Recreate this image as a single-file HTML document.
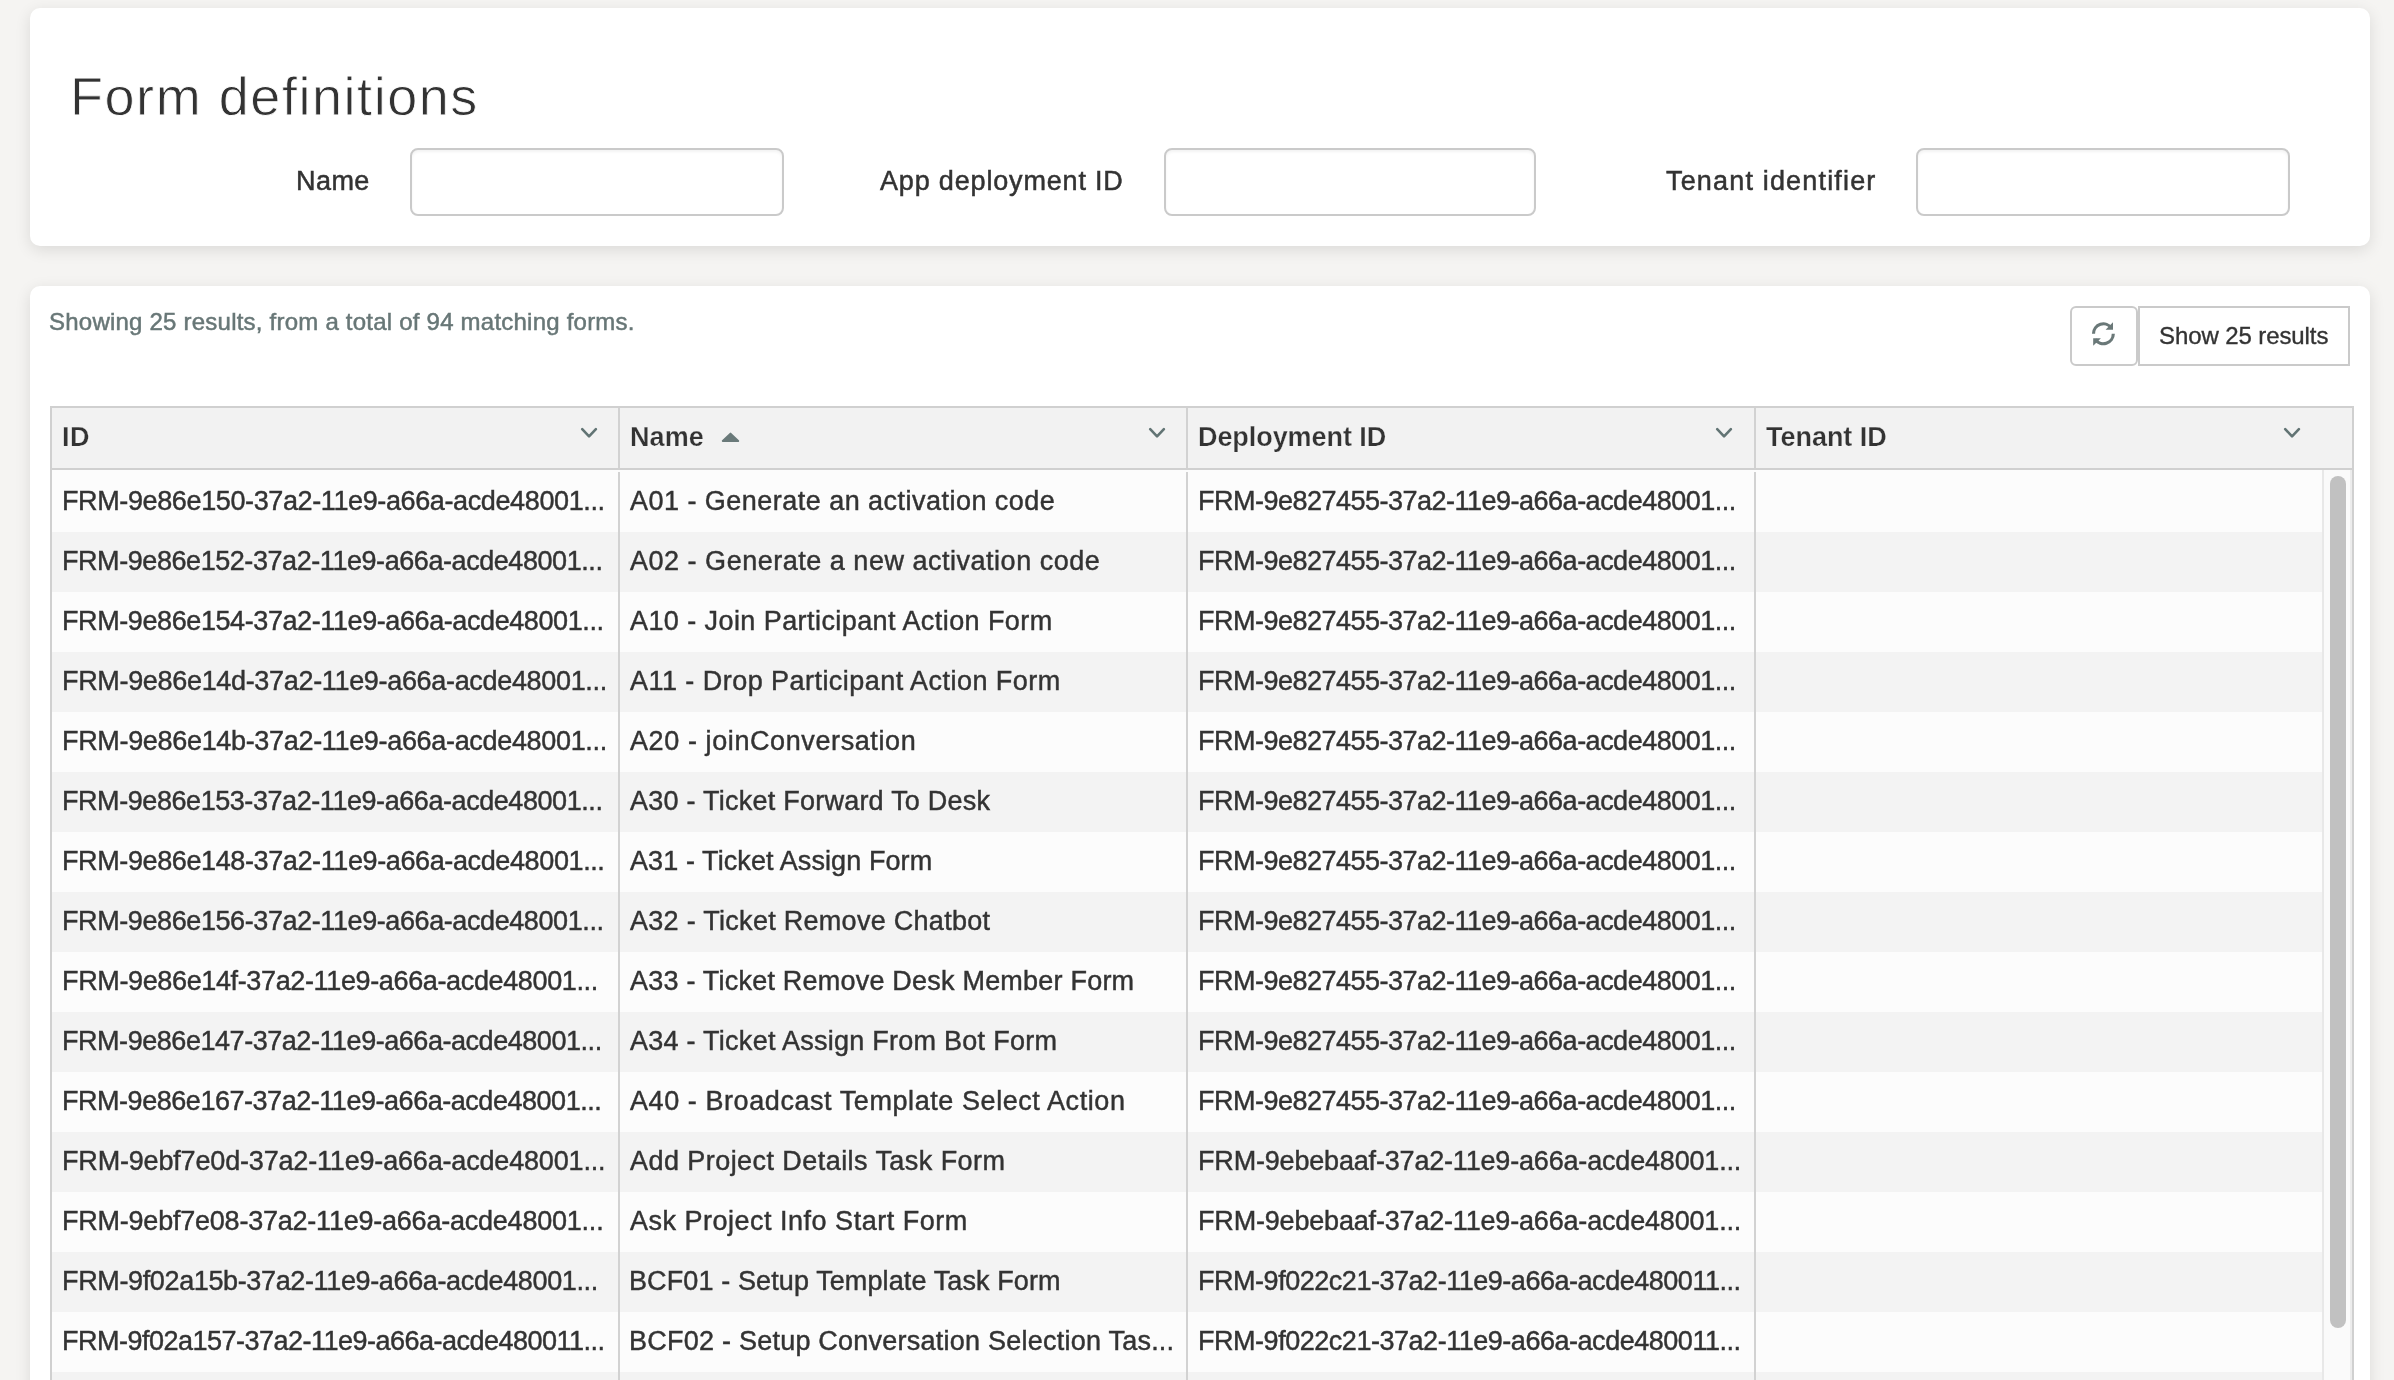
<!DOCTYPE html><html><head><meta charset="utf-8"><style>
*{margin:0;padding:0;box-sizing:border-box}
html,body{width:2394px;height:1380px;overflow:hidden;background:#f5f4f2;font-family:"Liberation Sans",sans-serif;color:#333}
.t{position:absolute;white-space:nowrap;line-height:1;will-change:transform}
.cell{-webkit-text-stroke:0.45px #333}
.lbl{-webkit-text-stroke:0.5px #333}
.grey{-webkit-text-stroke:0.5px #687777}
.btnt{-webkit-text-stroke:0.35px #333}
.title{color:#333;-webkit-text-stroke:0.8px #fff}
.card{position:absolute;background:#fff;border-radius:10px;box-shadow:0 4px 16px rgba(0,0,0,0.11)}
.inp{position:absolute;top:148px;height:68px;border:2px solid #cacaca;border-radius:8px;background:#fff;box-shadow:inset 0 2px 3px rgba(0,0,0,0.05)}
.grey{color:#687777}
.hdr{font-weight:bold;-webkit-text-stroke:0.25px #f2f2f2}
.row{position:absolute;left:52px;width:2270px;height:60px}
.vl{position:absolute;width:2px;background:#d2d2d2}
</style></head><body>
<div class="card" style="left:30px;top:8px;width:2340px;height:238px"></div>
<div class="t title" id="title" style="left:70.38px;top:68.99px;font-size:54px;letter-spacing:1.548px">Form definitions</div>
<div class="t lbl" id="lname" style="left:296.25px;top:167.54px;font-size:27px;letter-spacing:0.450px">Name</div>
<div class="inp" style="left:410px;width:374px"></div>
<div class="t lbl" id="lapp" style="left:880.05px;top:167.54px;font-size:27px;letter-spacing:0.827px">App deployment ID</div>
<div class="inp" style="left:1164px;width:372px"></div>
<div class="t lbl" id="lten" style="left:1666.44px;top:167.54px;font-size:27px;letter-spacing:1.170px">Tenant identifier</div>
<div class="inp" style="left:1916px;width:374px"></div>
<div class="card" style="left:30px;top:286px;width:2340px;height:1200px"></div>
<div class="t grey" id="showing" style="left:49.32px;top:309.68px;font-size:24px;letter-spacing:0.224px">Showing 25 results, from a total of 94 matching forms.</div>
<div style="position:absolute;left:2070px;top:306px;width:68px;height:60px;border:2px solid #cacaca;border-radius:6px;background:#fff"></div>
<svg style="position:absolute;left:2086px;top:316px" width="36" height="36" viewBox="0 0 36 36"><g fill="none" stroke="#6a7878" stroke-width="3.15"><path d="M7.5 17.8 A9.9 9.9 0 0 1 25.5 12.1"/><path d="M27.3 17.8 A9.9 9.9 0 0 1 9.3 23.5"/></g><path d="M27 6.3 L27 13.8 L19.6 13.8 Z" fill="#6a7878"/><path d="M7.2 22.2 L7.2 29.7 L14.9 22.2 Z" fill="#6a7878"/></svg>
<div style="position:absolute;left:2138px;top:306px;width:212px;height:60px;border:2px solid #cacaca;background:#fff"></div>
<div class="t btnt" id="btn" style="left:2159.10px;top:323.78px;font-size:24px;letter-spacing:-0.096px">Show 25 results</div>
<div style="position:absolute;left:50px;top:406px;width:2304px;height:1100px;border:2px solid #d0d0d0;background:#fcfcfc"></div>
<div style="position:absolute;left:52px;top:408px;width:2300px;height:60px;background:#f2f2f2"></div>
<div style="position:absolute;left:52px;top:468px;width:2300px;height:2px;background:#d0d0d0"></div>
<div class="row" style="top:470px;height:62px;background:#fcfcfc"></div>
<div class="row" style="top:532px;background:#f3f3f3"></div>
<div class="row" style="top:592px;background:#fcfcfc"></div>
<div class="row" style="top:652px;background:#f3f3f3"></div>
<div class="row" style="top:712px;background:#fcfcfc"></div>
<div class="row" style="top:772px;background:#f3f3f3"></div>
<div class="row" style="top:832px;background:#fcfcfc"></div>
<div class="row" style="top:892px;background:#f3f3f3"></div>
<div class="row" style="top:952px;background:#fcfcfc"></div>
<div class="row" style="top:1012px;background:#f3f3f3"></div>
<div class="row" style="top:1072px;background:#fcfcfc"></div>
<div class="row" style="top:1132px;background:#f3f3f3"></div>
<div class="row" style="top:1192px;background:#fcfcfc"></div>
<div class="row" style="top:1252px;background:#f3f3f3"></div>
<div class="row" style="top:1312px;background:#fcfcfc"></div>
<div class="row" style="top:1372px;background:#f3f3f3"></div>
<div class="vl" style="left:618px;top:408px;height:60px"></div>
<div class="vl" style="left:618px;top:472px;height:1000px"></div>
<div class="vl" style="left:1186px;top:408px;height:60px"></div>
<div class="vl" style="left:1186px;top:472px;height:1000px"></div>
<div class="vl" style="left:1754px;top:408px;height:60px"></div>
<div class="vl" style="left:1754px;top:472px;height:1000px"></div>
<div class="t hdr" id="h1" style="left:61.81px;top:424.34px;font-size:27px;letter-spacing:0.540px">ID</div>
<svg style="position:absolute;left:579px;top:425px" width="20" height="16" viewBox="0 0 20 16"><path d="M3.2 4.1 L10.05 11.3 L16.9 4.1" fill="none" stroke="#627474" stroke-width="2.6" stroke-linecap="round" stroke-linejoin="round"/></svg>
<div class="t hdr" id="h2" style="left:630.20px;top:424.34px;font-size:27px;letter-spacing:0.060px">Name</div>
<svg style="position:absolute;left:1147px;top:425px" width="20" height="16" viewBox="0 0 20 16"><path d="M3.2 4.1 L10.05 11.3 L16.9 4.1" fill="none" stroke="#627474" stroke-width="2.6" stroke-linecap="round" stroke-linejoin="round"/></svg>
<div class="t hdr" id="h3" style="left:1197.55px;top:424.34px;font-size:27px;letter-spacing:-0.071px">Deployment ID</div>
<svg style="position:absolute;left:1714px;top:425px" width="20" height="16" viewBox="0 0 20 16"><path d="M3.2 4.1 L10.05 11.3 L16.9 4.1" fill="none" stroke="#627474" stroke-width="2.6" stroke-linecap="round" stroke-linejoin="round"/></svg>
<div class="t hdr" id="h4" style="left:1766.17px;top:424.34px;font-size:27px;letter-spacing:-0.034px">Tenant ID</div>
<svg style="position:absolute;left:2282px;top:425px" width="20" height="16" viewBox="0 0 20 16"><path d="M3.2 4.1 L10.05 11.3 L16.9 4.1" fill="none" stroke="#627474" stroke-width="2.6" stroke-linecap="round" stroke-linejoin="round"/></svg>
<svg style="position:absolute;left:720px;top:430px" width="21" height="14" viewBox="0 0 21 14"><path d="M10.5 3.6 L18.2 11 L2.8 11 Z" fill="#6a7a7a" stroke="#6a7a7a" stroke-width="2" stroke-linejoin="round"/></svg>
<div class="t cell" id="r0a" style="left:62.03px;top:487.54px;font-size:27px;letter-spacing:-0.381px">FRM-9e86e150-37a2-11e9-a66a-acde48001...</div>
<div class="t cell" id="r0b" style="left:630.17px;top:487.54px;font-size:27px;letter-spacing:0.470px">A01 - Generate an activation code</div>
<div class="t cell" id="r0c" style="left:1198.25px;top:487.54px;font-size:27px;letter-spacing:-0.505px">FRM-9e827455-37a2-11e9-a66a-acde48001...</div>
<div class="t cell" id="r1a" style="left:62.03px;top:547.54px;font-size:27px;letter-spacing:-0.436px">FRM-9e86e152-37a2-11e9-a66a-acde48001...</div>
<div class="t cell" id="r1b" style="left:630.17px;top:547.54px;font-size:27px;letter-spacing:0.514px">A02 - Generate a new activation code</div>
<div class="t cell" id="r1c" style="left:1198.25px;top:547.54px;font-size:27px;letter-spacing:-0.505px">FRM-9e827455-37a2-11e9-a66a-acde48001...</div>
<div class="t cell" id="r2a" style="left:62.03px;top:607.54px;font-size:27px;letter-spacing:-0.408px">FRM-9e86e154-37a2-11e9-a66a-acde48001...</div>
<div class="t cell" id="r2b" style="left:630.17px;top:607.54px;font-size:27px;letter-spacing:0.425px">A10 - Join Participant Action Form</div>
<div class="t cell" id="r2c" style="left:1198.25px;top:607.54px;font-size:27px;letter-spacing:-0.505px">FRM-9e827455-37a2-11e9-a66a-acde48001...</div>
<div class="t cell" id="r3a" style="left:62.03px;top:667.54px;font-size:27px;letter-spacing:-0.325px">FRM-9e86e14d-37a2-11e9-a66a-acde48001...</div>
<div class="t cell" id="r3b" style="left:630.17px;top:667.54px;font-size:27px;letter-spacing:0.455px">A11 - Drop Participant Action Form</div>
<div class="t cell" id="r3c" style="left:1198.25px;top:667.54px;font-size:27px;letter-spacing:-0.505px">FRM-9e827455-37a2-11e9-a66a-acde48001...</div>
<div class="t cell" id="r4a" style="left:62.03px;top:727.54px;font-size:27px;letter-spacing:-0.325px">FRM-9e86e14b-37a2-11e9-a66a-acde48001...</div>
<div class="t cell" id="r4b" style="left:630.17px;top:727.54px;font-size:27px;letter-spacing:0.596px">A20 - joinConversation</div>
<div class="t cell" id="r4c" style="left:1198.25px;top:727.54px;font-size:27px;letter-spacing:-0.505px">FRM-9e827455-37a2-11e9-a66a-acde48001...</div>
<div class="t cell" id="r5a" style="left:62.03px;top:787.54px;font-size:27px;letter-spacing:-0.436px">FRM-9e86e153-37a2-11e9-a66a-acde48001...</div>
<div class="t cell" id="r5b" style="left:630.17px;top:787.54px;font-size:27px;letter-spacing:0.240px">A30 - Ticket Forward To Desk</div>
<div class="t cell" id="r5c" style="left:1198.25px;top:787.54px;font-size:27px;letter-spacing:-0.505px">FRM-9e827455-37a2-11e9-a66a-acde48001...</div>
<div class="t cell" id="r6a" style="left:62.03px;top:847.54px;font-size:27px;letter-spacing:-0.385px">FRM-9e86e148-37a2-11e9-a66a-acde48001...</div>
<div class="t cell" id="r6b" style="left:630.17px;top:847.54px;font-size:27px;letter-spacing:0.090px">A31 - Ticket Assign Form</div>
<div class="t cell" id="r6c" style="left:1198.25px;top:847.54px;font-size:27px;letter-spacing:-0.505px">FRM-9e827455-37a2-11e9-a66a-acde48001...</div>
<div class="t cell" id="r7a" style="left:62.03px;top:907.54px;font-size:27px;letter-spacing:-0.408px">FRM-9e86e156-37a2-11e9-a66a-acde48001...</div>
<div class="t cell" id="r7b" style="left:630.17px;top:907.54px;font-size:27px;letter-spacing:0.284px">A32 - Ticket Remove Chatbot</div>
<div class="t cell" id="r7c" style="left:1198.25px;top:907.54px;font-size:27px;letter-spacing:-0.505px">FRM-9e827455-37a2-11e9-a66a-acde48001...</div>
<div class="t cell" id="r8a" style="left:62.03px;top:967.54px;font-size:27px;letter-spacing:-0.362px">FRM-9e86e14f-37a2-11e9-a66a-acde48001...</div>
<div class="t cell" id="r8b" style="left:630.17px;top:967.54px;font-size:27px;letter-spacing:0.213px">A33 - Ticket Remove Desk Member Form</div>
<div class="t cell" id="r8c" style="left:1198.25px;top:967.54px;font-size:27px;letter-spacing:-0.505px">FRM-9e827455-37a2-11e9-a66a-acde48001...</div>
<div class="t cell" id="r9a" style="left:62.03px;top:1027.54px;font-size:27px;letter-spacing:-0.455px">FRM-9e86e147-37a2-11e9-a66a-acde48001...</div>
<div class="t cell" id="r9b" style="left:630.17px;top:1027.54px;font-size:27px;letter-spacing:0.259px">A34 - Ticket Assign From Bot Form</div>
<div class="t cell" id="r9c" style="left:1198.25px;top:1027.54px;font-size:27px;letter-spacing:-0.505px">FRM-9e827455-37a2-11e9-a66a-acde48001...</div>
<div class="t cell" id="r10a" style="left:62.03px;top:1087.54px;font-size:27px;letter-spacing:-0.464px">FRM-9e86e167-37a2-11e9-a66a-acde48001...</div>
<div class="t cell" id="r10b" style="left:630.17px;top:1087.54px;font-size:27px;letter-spacing:0.572px">A40 - Broadcast Template Select Action</div>
<div class="t cell" id="r10c" style="left:1198.25px;top:1087.54px;font-size:27px;letter-spacing:-0.505px">FRM-9e827455-37a2-11e9-a66a-acde48001...</div>
<div class="t cell" id="r11a" style="left:62.03px;top:1147.54px;font-size:27px;letter-spacing:-0.175px">FRM-9ebf7e0d-37a2-11e9-a66a-acde48001...</div>
<div class="t cell" id="r11b" style="left:630.17px;top:1147.54px;font-size:27px;letter-spacing:0.440px">Add Project Details Task Form</div>
<div class="t cell" id="r11c" style="left:1198.25px;top:1147.54px;font-size:27px;letter-spacing:-0.182px">FRM-9ebebaaf-37a2-11e9-a66a-acde48001...</div>
<div class="t cell" id="r12a" style="left:62.03px;top:1207.54px;font-size:27px;letter-spacing:-0.224px">FRM-9ebf7e08-37a2-11e9-a66a-acde48001...</div>
<div class="t cell" id="r12b" style="left:630.17px;top:1207.54px;font-size:27px;letter-spacing:0.502px">Ask Project Info Start Form</div>
<div class="t cell" id="r12c" style="left:1198.25px;top:1207.54px;font-size:27px;letter-spacing:-0.182px">FRM-9ebebaaf-37a2-11e9-a66a-acde48001...</div>
<div class="t cell" id="r13a" style="left:62.03px;top:1267.54px;font-size:27px;letter-spacing:-0.362px">FRM-9f02a15b-37a2-11e9-a66a-acde48001...</div>
<div class="t cell" id="r13b" style="left:629.25px;top:1267.54px;font-size:27px;letter-spacing:0.110px">BCF01 - Setup Template Task Form</div>
<div class="t cell" id="r13c" style="left:1198.25px;top:1267.54px;font-size:27px;letter-spacing:-0.470px">FRM-9f022c21-37a2-11e9-a66a-acde480011...</div>
<div class="t cell" id="r14a" style="left:62.03px;top:1327.54px;font-size:27px;letter-spacing:-0.511px">FRM-9f02a157-37a2-11e9-a66a-acde480011...</div>
<div class="t cell" id="r14b" style="left:629.25px;top:1327.54px;font-size:27px;letter-spacing:0.234px">BCF02 - Setup Conversation Selection Tas...</div>
<div class="t cell" id="r14c" style="left:1198.25px;top:1327.54px;font-size:27px;letter-spacing:-0.470px">FRM-9f022c21-37a2-11e9-a66a-acde480011...</div>
<div style="position:absolute;left:2322px;top:470px;width:30px;height:910px;background:#fafafa;border-left:2px solid #e8e8e8;border-right:2px solid #ececec"></div>
<div style="position:absolute;left:2330px;top:476px;width:16px;height:852px;background:#c1c1c1;border-radius:8px"></div>
</body></html>
